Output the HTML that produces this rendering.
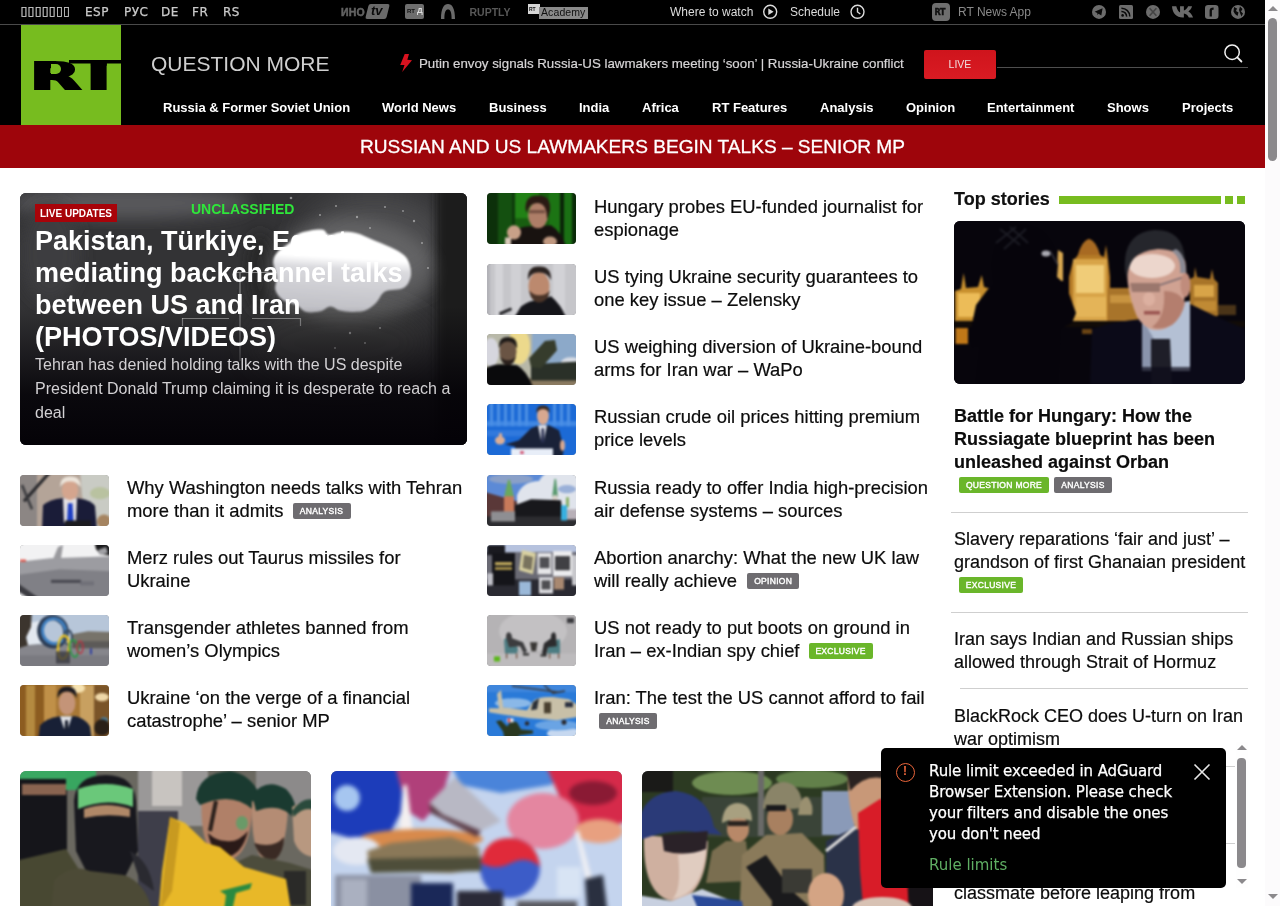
<!DOCTYPE html>
<html lang="en">
<head>
<meta charset="utf-8">
<title>RT - Breaking News, Russia News, World News and Video</title>
<style>
*{box-sizing:border-box;margin:0;padding:0}
html,body{width:1280px;height:906px;overflow:hidden;background:#fff}
body{font-family:"Liberation Sans",sans-serif;color:#000;position:relative}
a{color:inherit;text-decoration:none}
.abs{position:absolute}
#page{will-change:transform;position:absolute;left:0;top:0;width:1265px;height:906px;overflow:hidden;background:#fff}
/* header */
#hdr{position:absolute;left:0;top:0;width:1265px;height:125px;background:#000}
#topline{position:absolute;left:0;top:24px;width:1265px;height:1px;background:#4a4a4a}
.lang{position:absolute;top:4px;font-family:"DejaVu Sans","Liberation Sans",sans-serif;font-size:12px;line-height:16px;color:#cacaca;white-space:nowrap;letter-spacing:.5px;-webkit-text-stroke:.25px #cacaca}
.tt{position:absolute;top:4px;font-size:12px;line-height:16px;color:#dcdcdc;white-space:nowrap}
#logo{position:absolute;left:21px;top:25px;width:99.5px;height:100px;background:#77bc1f;overflow:hidden}
#qm{position:absolute;left:151px;top:51px;font-size:21px;line-height:26px;color:#cfcfcf;white-space:nowrap}
#tick{position:absolute;left:419px;top:56px;font-size:13.3px;line-height:16px;color:#d6d4d6;white-space:nowrap;-webkit-text-stroke:.2px #d6d4d6}
#live{position:absolute;left:924px;top:50px;width:72px;height:29px;background:linear-gradient(#cf141c,#d91b23);border-radius:2px;color:#f0dcdc;font-size:10.5px;line-height:28px;text-align:center}
#sline{position:absolute;left:997px;top:67px;width:251px;height:1px;background:#4e4e4e}
.nav{position:absolute;top:100px;font-size:13px;line-height:16px;font-weight:bold;color:#fff;white-space:nowrap}
#brk{position:absolute;left:0;top:125px;width:1265px;height:43px;background:#9e050b;color:#fff;font-size:19.1px;line-height:43px;-webkit-text-stroke:.3px #fff;text-align:center;white-space:nowrap}
/* scrollbar */
#sb{position:absolute;left:1265px;top:0;width:15px;height:906px;background:#fcfbfc}
#sbthumb{position:absolute;left:3px;top:18px;width:9px;height:143px;border-radius:5px;background:#8b898c}
/* lists */
.th{position:absolute;width:89px;height:50.5px;border-radius:4px;overflow:hidden;background:#888}
.th svg{display:block;width:89px;height:50.5px}
.t18{position:absolute;font-size:18px;line-height:23px;color:#0c0c0c;white-space:nowrap;margin-top:1px;-webkit-text-stroke:.2px #0c0c0c}
.tag{display:inline-block;vertical-align:top;height:16px;line-height:16px;font-size:8.5px;font-weight:normal;letter-spacing:.3px;text-align:center;border-radius:2px;color:#fff;background:#6e6c70;position:relative;-webkit-text-stroke:.4px #fff;width:58px}
.tag.g{background:#6ab62a}
.hr{position:absolute;height:1px;background:#cfcfcf}

#hero{position:absolute;left:20px;top:193px;width:447px;height:252px;border-radius:6px;overflow:hidden;background:#2b2b2d}
#heroimg{position:absolute;left:0;top:0}
#herograd{position:absolute;left:0;top:0;width:447px;height:252px;background:linear-gradient(to bottom,rgba(0,0,0,0) 45%,rgba(3,1,6,.85) 80%,rgba(3,1,6,.97) 100%)}
#lu{position:absolute;left:15px;top:11px;width:82px;height:18px;background:#a80309;color:#fff;font-weight:bold;font-size:10px;line-height:19.5px;text-align:center;white-space:nowrap}
#uncl{position:absolute;left:171px;top:8px;font-weight:bold;font-size:14px;line-height:16px;color:#2fe63a;white-space:nowrap}
#htitle{position:absolute;left:15px;top:32px;font-weight:bold;font-size:27px;line-height:32px;color:#fff;white-space:nowrap}
#hsum{position:absolute;left:15px;top:160px;font-size:16px;line-height:24px;color:#d2d0d3;white-space:nowrap}
.t184{position:absolute;font-size:18.4px;line-height:23px;color:#0c0c0c;white-space:nowrap;margin-top:1px;-webkit-text-stroke:.2px #0c0c0c}
#tops{position:absolute;left:954px;top:188px;-webkit-text-stroke:.2px #0c0c0c;font-size:18px;line-height:23px;font-weight:bold;color:#111;white-space:nowrap}
#topimg{position:absolute;left:954px;top:221px;width:291px;height:163px;border-radius:6px;overflow:hidden;background:#0b0712}
.card{position:absolute;top:771px;width:291px;height:164px;border-radius:6px;overflow:hidden;background:#777}
#isb{position:absolute;left:1236px;top:742px;width:12px;height:146px;background:#fefefe}
#isbthumb{position:absolute;left:1px;top:16px;width:9px;height:110px;border-radius:4px;background:#8b898c}
#pop{position:absolute;left:881px;top:748px;width:345px;height:140px;border-radius:5px;background:#000;color:#fff}
#popicon{position:absolute;left:14.5px;top:14.5px;width:19px;height:19px;border:1.8px solid #e8643a;border-radius:50%;color:#e8643a;font-size:12px;line-height:15.5px;text-align:center;font-weight:bold}
#poptext{position:absolute;left:48px;top:13px;font-family:"DejaVu Sans","Liberation Sans",sans-serif;font-size:15px;line-height:21px;white-space:nowrap;color:#fff;letter-spacing:-0.1px;-webkit-text-stroke:.25px #fff}
#poplink{position:absolute;left:48px;top:107px;font-family:"DejaVu Sans","Liberation Sans",sans-serif;font-size:15px;line-height:21px;color:#5fae63;white-space:nowrap}
#popx{position:absolute;left:312px;top:15px}

#lR{position:absolute;left:0;top:0;font-family:"DejaVu Sans","Liberation Sans",sans-serif;font-weight:bold;font-size:39px;line-height:1;color:#000;-webkit-text-stroke:2.3px #000;transform-origin:0 0;transform:translate(8.9px,32.2px) scale(1.685,.97)}
#lT{position:absolute;left:0;top:0;font-family:"DejaVu Sans","Liberation Sans",sans-serif;font-weight:bold;font-size:41px;line-height:1;color:#000;transform-origin:0 0;transform:translate(47.5px,31.2px) scale(2.14,1);clip-path:polygon(0 0,28px 0,28px 7.2px,17.95px 7.2px,17.95px 41px,10.3px 41px,10.3px 7.2px,0 7.2px)}
#lC{position:absolute;left:29.5px;top:38.5px;width:10.5px;height:10.3px;background:#77bc1f;border-radius:0 5px 5px 0}
.plogo{position:absolute;white-space:nowrap;line-height:14px}
.arr{position:absolute;width:0;height:0;border-left:5px solid transparent;border-right:5px solid transparent}
.arr.up{border-bottom:5px solid #8b898c}.arr.dn{border-top:5px solid #8b898c}
.arr.s{}
</style>
</head>
<body>
<div id="page">
<svg width="0" height="0" style="position:absolute"><defs>
<filter id="b07" x="-5%" y="-5%" width="110%" height="110%" color-interpolation-filters="sRGB"><feGaussianBlur stdDeviation="0.7"/></filter>
<filter id="b09" x="-5%" y="-5%" width="110%" height="110%" color-interpolation-filters="sRGB"><feGaussianBlur stdDeviation="0.9"/></filter>
<filter id="b1" x="-5%" y="-5%" width="110%" height="110%" color-interpolation-filters="sRGB"><feGaussianBlur stdDeviation="1"/></filter>
<filter id="b15" x="-5%" y="-5%" width="110%" height="110%" color-interpolation-filters="sRGB"><feGaussianBlur stdDeviation="1.5"/></filter>
<filter id="b2" x="-5%" y="-5%" width="110%" height="110%" color-interpolation-filters="sRGB"><feGaussianBlur stdDeviation="2"/></filter>
<filter id="b3" x="-5%" y="-5%" width="110%" height="110%" color-interpolation-filters="sRGB"><feGaussianBlur stdDeviation="3"/></filter>
<filter id="b6" x="-10%" y="-10%" width="120%" height="120%" color-interpolation-filters="sRGB"><feGaussianBlur stdDeviation="6"/></filter>
</defs></svg>
<div id="hdr">
  <span class="lang" style="left:20.5px;top:3px;font-size:12.5px;letter-spacing:.2px">▯▯▯▯▯▯▯</span>
  <span class="lang" style="left:85px">ESP</span>
  <span class="lang" style="left:124px">РУС</span>
  <span class="lang" style="left:161px">DE</span>
  <span class="lang" style="left:192px">FR</span>
  <span class="lang" style="left:223px">RS</span>
  <span class="tt" style="left:670px">Where to watch</span>
  <span class="tt" style="left:790px">Schedule</span>
  <span class="tt" style="left:958px;color:#8a8a8a">RT News App</span>

  <!-- partner logos -->
  <span class="plogo" style="left:341px;top:5px;font-size:10.5px;font-weight:bold;color:#626262;letter-spacing:.2px;-webkit-text-stroke:.5px #626262">ИНО</span>
  <span class="abs" style="left:367px;top:4px;width:21px;height:15px;background:#6a6a6a;transform:skewX(-14deg);border-radius:2px"></span>
  <span class="plogo" style="left:371px;top:4px;font-size:13px;font-weight:bold;color:#0a0a0a;font-style:italic">tv</span>
  <span class="abs" style="left:405px;top:4px;width:19px;height:15px;background:#6e6e6e;border-radius:2px"></span>
  <span class="plogo" style="left:407px;top:7px;font-size:6px;font-weight:bold;color:#111;line-height:8px">RT</span>
  <span class="plogo" style="left:417px;top:6px;font-size:8px;font-weight:bold;color:#ddd;line-height:10px">Д</span>
  <svg class="abs" style="left:440px;top:3px" width="16" height="17" viewBox="0 0 16 17"><path d="M1 16 C1 5 4 1 8 1 C12 1 15 5 15 16 L11.6 16 C11.6 9 10.5 6.5 8 6.5 C5.5 6.5 4.4 9 4.4 16 Z" fill="#6a6a6a"/></svg>
  <span class="plogo" style="left:469.5px;top:5px;font-size:10.5px;font-weight:bold;color:#585858">RUPTLY</span>
  <span class="abs" style="left:528px;top:4px;width:12px;height:10px;background:#d6d6d6"></span>
  <span class="plogo" style="left:529px;top:6px;font-size:5px;font-weight:bold;color:#111;line-height:6px">RT</span>
  <span class="abs" style="left:539px;top:7px;width:49px;height:12px;background:#8a8a8a"></span>
  <span class="plogo" style="left:541px;top:6px;font-size:10.5px;color:#111;line-height:13px;letter-spacing:.1px">Academy</span>
  <!-- play / clock -->
  <svg class="abs" style="left:762px;top:4px" width="16" height="16" viewBox="0 0 16 16"><circle cx="8.2" cy="7.8" r="6.5" fill="none" stroke="#dcdcdc" stroke-width="1.4"/><path d="M6.3 4.6 L11.6 7.8 L6.3 11 Z" fill="#dcdcdc"/></svg>
  <svg class="abs" style="left:849px;top:4px" width="16" height="16" viewBox="0 0 16 16"><circle cx="8.5" cy="7.8" r="6.5" fill="none" stroke="#dcdcdc" stroke-width="1.4"/><path d="M8.5 3.8 V8 L11.3 10" fill="none" stroke="#dcdcdc" stroke-width="1.4"/></svg>
  <!-- app icon -->
  <span class="abs" style="left:932px;top:3px;width:18px;height:18px;background:#6e6e6e;border-radius:4px"></span>
  <span class="plogo" style="left:934.5px;top:9px;font-size:8px;font-weight:bold;color:#111;line-height:8px;letter-spacing:-.3px;-webkit-text-stroke:.4px #111;font-family:'DejaVu Sans','Liberation Sans',sans-serif">RT</span>
  <!-- social -->
  <svg class="abs" style="left:1091px;top:4px" width="156" height="16" viewBox="0 0 156 16">
    <circle cx="8" cy="7.9" r="7" fill="#6c6c6c"/><path d="M3.6 7.8 L11.6 4.3 L10.3 11.6 L7.6 9.7 L6.4 10.9 L6.3 8.9 Z" fill="#0a0a0a"/>
    <rect x="28" y="1" width="14" height="14" rx="1.5" fill="#6c6c6c"/><circle cx="31.6" cy="11.4" r="1.3" fill="#0a0a0a"/><path d="M30.4 7.4 A5 5 0 0 1 35.6 12.6 M30.4 4.2 A8.3 8.3 0 0 1 38.8 12.6" stroke="#0a0a0a" stroke-width="1.5" fill="none"/>
    <circle cx="62" cy="7.9" r="7" fill="#6c6c6c"/><path d="M58.6 4.2 L65.4 11.8 M65.4 4.2 L58.6 11.8" stroke="#444" stroke-width="1.6"/>
    <path d="M81 2.8 H84.8 C85.5 6 87 8.3 88.2 8.6 V2.8 H91.6 V6.7 C93 6.5 94.6 4.6 95.4 2.8 H98.9 C98.4 5 96.8 6.9 95.6 7.6 C96.8 8.2 98.8 9.8 99.8 13.4 H96 C95.3 11.4 93.6 9.8 91.6 9.6 V13.4 H90.6 C85 13.4 81.4 9.4 81 2.8 Z" fill="#6c6c6c" transform="translate(-9.72,-0.6) scale(1.12,1.06)"/>
    <rect x="114" y="1" width="13.5" height="14" rx="3.2" fill="#6c6c6c"/><path d="M118.6 12.5 V6.6 C118.6 4.6 119.8 3.6 122.6 3.6 V5.8 C121.3 5.8 120.9 6.2 120.9 7.2 V12.5 Z" fill="#0a0a0a"/>
    <circle cx="147" cy="7.9" r="7" fill="#6c6c6c"/><path d="M143 3 L146 4.5 L145 7 L147.5 8.5 L146.5 12 L144 10 L142.5 7.5 Z M149 2.5 L151.5 5 L150 7.5 L152 9.5 L150.5 12.5 L149 9 L148 6 Z" fill="#0a0a0a"/>
  </svg>
  <!-- lightning -->
  <svg class="abs" style="left:398px;top:52px" width="16" height="22" viewBox="398 52 16 22"><path d="M404.7 54 L409 54 L407.3 59.7 L412 60.3 L402.2 72 L404.5 65 L400.2 65 Z" fill="#d8121f"/></svg>
  <!-- search -->
  <svg class="abs" style="left:1222px;top:42px" width="22" height="22" viewBox="1222 42 22 22"><circle cx="1232.1" cy="52.2" r="7.2" fill="none" stroke="#f2f2f2" stroke-width="1.5"/><path d="M1237.3 57.4 L1241.4 61.5" stroke="#f2f2f2" stroke-width="1.8" stroke-linecap="round"/></svg>
  <div id="topline"></div>
  <div id="logo"><span id="lR">R</span><span id="lT">T</span><i id="lC"></i></div>
  <div id="qm">QUESTION MORE</div>
  <div id="tick">Putin envoy signals Russia-US lawmakers meeting ‘soon’ | Russia-Ukraine conflict</div>
  <div id="live">LIVE</div>
  <div id="sline"></div>
  <span class="nav" style="left:163px">Russia &amp; Former Soviet Union</span>
  <span class="nav" style="left:382px">World News</span>
  <span class="nav" style="left:489px">Business</span>
  <span class="nav" style="left:579px">India</span>
  <span class="nav" style="left:642px">Africa</span>
  <span class="nav" style="left:712px">RT Features</span>
  <span class="nav" style="left:820px">Analysis</span>
  <span class="nav" style="left:906px">Opinion</span>
  <span class="nav" style="left:987px">Entertainment</span>
  <span class="nav" style="left:1107px">Shows</span>
  <span class="nav" style="left:1182px">Projects</span>
</div>
<div id="brk">RUSSIAN AND US LAWMAKERS BEGIN TALKS – SENIOR MP</div>

<!-- hero -->
<div id="hero">
  <svg id="heroimg" width="447" height="252" viewBox="0 0 447 252"><defs>
<filter id="hb8" x="-30%" y="-30%" width="160%" height="160%"><feGaussianBlur stdDeviation="8"/></filter>
<filter id="hb14" x="-30%" y="-30%" width="160%" height="160%"><feGaussianBlur stdDeviation="14"/></filter>
<filter id="hb1"><feGaussianBlur stdDeviation="1.1"/></filter>
<filter id="hb4" x="-30%" y="-30%" width="160%" height="160%"><feGaussianBlur stdDeviation="4"/></filter>
<linearGradient id="hbg" x1=".1" y1="0" x2="0" y2="1"><stop offset="0" stop-color="#fff"/><stop offset=".3" stop-color="#fff"/><stop offset=".43" stop-color="#dadade"/><stop offset="1" stop-color="#bcbcc2"/></linearGradient>
</defs>
<rect width="447" height="252" fill="#333335"/>
<ellipse cx="110" cy="10" rx="120" ry="16" fill="#59595b" filter="url(#hb8)"/>
<ellipse cx="30" cy="60" rx="30" ry="50" fill="#3e3e40" filter="url(#hb8)"/>
<ellipse cx="355" cy="50" rx="75" ry="50" fill="#4c4c4e" filter="url(#hb14)"/>
<ellipse cx="320" cy="150" rx="90" ry="40" fill="#3c3c3e" filter="url(#hb14)"/>
<rect x="416" y="-10" width="40" height="280" fill="#1d1d1f" filter="url(#hb4)"/>
<ellipse cx="240" cy="80" rx="14" ry="40" fill="#262628" filter="url(#hb8)"/>
<g fill="#d8d8d8" opacity=".55"><circle cx="271" cy="5" r="1.3"/><circle cx="316" cy="13" r="1"/><circle cx="337" cy="24" r="1.2"/><circle cx="365" cy="14" r="1"/><circle cx="394" cy="28" r="1.2"/><circle cx="402" cy="50" r="1"/><circle cx="383" cy="18" r="0.9"/><circle cx="350" cy="35" r="1"/><circle cx="408" cy="75" r="1"/><circle cx="300" cy="22" r="1"/><circle cx="330" cy="140" r="1.2"/><circle cx="345" cy="150" r="1"/><circle cx="360" cy="135" r="1"/><circle cx="315" cy="155" r="1"/><circle cx="372" cy="165" r="1.2"/></g>
<g stroke="#cfcfcf" stroke-opacity=".55" stroke-width="1.2" fill="none"><path d="M214 79.5 H257"/><path d="M220 80 V168"/><path d="M162 125.5 H209 M232 125.5 H280"/><path d="M162.5 125 V133 M280.5 125 V133"/></g>
<ellipse cx="330" cy="78" rx="84" ry="52" fill="#bbb" opacity=".22" filter="url(#hb8)"/>
<path d="M253.2 68.4 C253.4 64.2 255.4 61.7 258.1 58.6 C260.8 55.5 266.3 52.9 269.4 50.1 C272.4 47.3 272.9 43.8 276.4 41.7 C279.9 39.6 286.1 38.3 290.5 37.5 C294.9 36.7 300.1 36.1 303.1 36.8 C306.2 37.5 305.8 41.4 308.8 41.7 C311.9 42.1 316.7 39.1 321.4 38.9 C326.1 38.7 332.0 39.1 336.9 40.3 C341.8 41.5 345.4 43.6 351.0 45.9 C356.6 48.2 365.0 51.5 370.6 54.3 C376.2 57.1 381.4 59.5 384.7 62.8 C388.0 66.1 389.4 70.2 390.3 74.0 C391.2 77.8 391.5 81.8 390.3 85.3 C389.1 88.8 387.5 92.9 383.3 95.1 C379.1 97.3 369.4 96.2 365.0 98.6 C360.6 100.9 359.9 106.0 356.6 109.2 C353.3 112.4 349.5 116.0 345.3 117.6 C341.1 119.2 335.5 119.0 331.3 119.0 C327.1 119.0 323.5 118.5 320.0 117.6 C316.5 116.7 313.5 113.3 310.2 113.4 C306.9 113.5 304.3 117.4 300.3 118.3 C296.3 119.2 290.3 120.0 286.3 119.0 C282.3 118.0 280.4 114.1 276.4 112.0 C272.4 109.9 265.8 109.0 262.3 106.4 C258.8 103.8 256.2 100.2 255.3 96.5 C254.4 92.8 257.1 88.6 256.7 83.9 C256.3 79.2 253.0 72.6 253.2 68.4Z" fill="url(#hbg)" filter="url(#hb1)"/>
</svg>
  <div id="herograd"></div>
  <span id="lu">LIVE UPDATES</span>
  <span id="uncl">UNCLASSIFIED</span>
  <div id="htitle">Pakistan, Türkiye, Egypt<br>mediating backchannel talks<br>between US and Iran<br>(PHOTOS/VIDEOS)</div>
  <div id="hsum">Tehran has denied holding talks with the US despite<br>President Donald Trump claiming it is desperate to reach a<br>deal</div>
</div>
<!-- left list -->
<div class="th" style="left:20px;top:475px" id="th_l1"><svg viewBox="0 0 89 50" preserveAspectRatio="none"><g filter="url(#b09)"><rect x="-5" y="-5" width="99" height="60" fill="#b4a498"/>
<rect x="-5" y="-5" width="22" height="60" fill="#8c8684"/>
<path d="M60 -5 H95 V55 H72 L62 20Z" fill="#c9cbc4"/>
<ellipse cx="80" cy="18" rx="10" ry="6" fill="#b9c2a0"/>
<path d="M30 -3 L4 26" stroke="#2a2a2e" stroke-width="3.2"/>
<path d="M2 10 L12 34" stroke="#3a3a3e" stroke-width="2.5"/>
<path d="M22 55 L23 30 Q30 24 42 23 L58 23 Q72 25 75 31 L77 55Z" fill="#1a1c38"/>
<path d="M43 23 L57 23 L56 47 L44 47Z" fill="#e4e0e2"/>
<path d="M48 28 L52.5 28 L53.5 46 L47 46Z" fill="#1f3fc4"/>
<ellipse cx="50" cy="15" rx="8.2" ry="10" fill="#d4a58e"/>
<path d="M40 12 Q40 1 50 1.5 Q61 1 60.5 12 Q56 6 50 6.5 Q44 6 40 12Z" fill="#ece4da"/>
<rect x="45" y="45" width="26" height="8" fill="#1c1c20"/>
<ellipse cx="84" cy="46" rx="7" ry="7" fill="#a58460"/></g></svg></div>
<div class="t184" style="left:127px;top:475px">Why Washington needs talks with Tehran<br>more than it admits <span class="tag" style="margin-left:4px;top:4px">ANALYSIS</span></div>
<div class="th" style="left:20px;top:545px" id="th_l2"><svg viewBox="0 0 89 50" preserveAspectRatio="none"><g filter="url(#b09)"><rect x="-5" y="-5" width="99" height="60" fill="#f2f2f3"/>
<path d="M-5 17 L30 13 L94 11 V55 H-5Z" fill="#9c9ca1"/>
<path d="M-5 30 L40 24 L94 26 V55 H-5Z" fill="#808086"/>
<path d="M-5 38 L22 55 H-5Z" fill="#e6e6e8"/>
<path d="M-5 36 L24 56 L14 56 L-5 44Z" fill="#3c3c42"/>
<path d="M33 14 L38 2 L43 0 L41 13Z" fill="#9a9a9e"/>
<path d="M74 -5 H94 V11 L80 9 L76 4Z" fill="#18181a"/>
<path d="M78 5 L86 2 L88 8 L80 10Z" fill="#a0a0a4"/>
<rect x="0" y="14.5" width="6" height="2" fill="#e0483c"/>
<rect x="31" y="34.5" width="30" height="3" fill="#3e3e46" opacity=".85"/>
<rect x="60" y="36" width="14" height="4" fill="#6a6a72" opacity=".7"/></g></svg></div>
<div class="t184" style="left:127px;top:545px">Merz rules out Taurus missiles for<br>Ukraine</div>
<div class="th" style="left:20px;top:615px" id="th_l3"><svg viewBox="0 0 89 50" preserveAspectRatio="none"><g filter="url(#b09)"><rect x="-5" y="-5" width="99" height="60" fill="#b7c6d9"/>
<rect x="-5" y="29" width="99" height="30" fill="#86868c"/>
<rect x="-5" y="40" width="99" height="15" fill="#7a7a80"/>
<path d="M8 8 L20 6 L24 28 L6 30Z" fill="#e2e8f0"/>
<path d="M-5 -5 H12 L11 12 L6 22 L8 30 L-5 34Z" fill="#3c352e"/>
<path d="M52 19 L68 16 L94 17 V32 H52Z" fill="#77736a"/>
<path d="M52 26 H94 V33 H52Z" fill="#5c5a58"/>
<ellipse cx="33" cy="16.5" rx="13" ry="14" fill="none" stroke="#2c3c54" stroke-width="5.5" transform="rotate(-18 33 16.5)"/>
<ellipse cx="34" cy="16" rx="11.5" ry="12.5" fill="none" stroke="#3f7fc0" stroke-width="3" transform="rotate(-18 34 16)"/>
<ellipse cx="48" cy="22" rx="4" ry="7" fill="none" stroke="#3a4c62" stroke-width="2.2"/>
<ellipse cx="43.5" cy="32" rx="5.5" ry="11.5" fill="none" stroke="#e8c020" stroke-width="2.3" transform="rotate(6 43.5 32)"/>
<ellipse cx="54" cy="33" rx="4" ry="8.5" fill="none" stroke="#2a9a48" stroke-width="1.8" transform="rotate(-8 54 33)"/>
<ellipse cx="60" cy="32" rx="3" ry="6" fill="none" stroke="#c03040" stroke-width="1.4"/>
<rect x="36" y="36" width="14" height="12" fill="#3a3a40" opacity=".8"/>
<rect x="70" y="33" width="2" height="6" fill="#3040a0"/></g></svg></div>
<div class="t184" style="left:127px;top:615px">Transgender athletes banned from<br>women’s Olympics</div>
<div class="th" style="left:20px;top:685px" id="th_l4"><svg viewBox="0 0 89 50" preserveAspectRatio="none"><g filter="url(#b09)"><rect x="-5" y="-5" width="99" height="60" fill="#a87836"/>
<rect x="-5" y="-5" width="30" height="60" fill="#8c5c20"/>
<rect x="6" y="0" width="9" height="55" fill="#b48a40"/>
<rect x="24" y="0" width="12" height="40" fill="#c09048"/>
<rect x="60" y="0" width="14" height="55" fill="#c8a060"/>
<rect x="74" y="0" width="20" height="55" fill="#7a5428"/>
<ellipse cx="58" cy="3" rx="7" ry="5" fill="#f6e2b0"/>
<ellipse cx="82" cy="12" rx="7" ry="4" fill="#f0d8a8"/>
<ellipse cx="84" cy="36" rx="4" ry="4" fill="#4a80a0"/>
<ellipse cx="82" cy="42" rx="8" ry="8" fill="#2a2018"/>
<path d="M18 55 L20 40 Q26 33 40 31 L56 31 Q66 34 70 41 L72 55Z" fill="#182036"/>
<path d="M40 31 L52 31 L48 43 L44 43Z" fill="#e0e2e6"/>
<path d="M45 35 L48 35 L48.5 44 L44.5 44Z" fill="#1a2030"/>
<ellipse cx="47" cy="18" rx="8.4" ry="11.5" fill="#c49478"/>
<path d="M37.5 13 Q37 1.5 47 1.5 Q57.5 1.5 56.5 13 Q53 6 47 6.5 Q41 6 37.5 13Z" fill="#1c1a20"/></g></svg></div>
<div class="t184" style="left:127px;top:685px">Ukraine ‘on the verge of a financial<br>catastrophe’ – senior MP</div>
<!-- middle list -->
<div class="th" style="left:487px;top:193px" id="th_m1"><svg viewBox="0 0 89 50" preserveAspectRatio="none"><g filter="url(#b09)"><rect x="-5" y="-5" width="99" height="60" fill="#185e10"/>
<rect x="-5" y="-5" width="16" height="60" fill="#0c300a"/>
<rect x="11" y="-5" width="14" height="60" fill="#145010"/>
<rect x="28" y="-5" width="24" height="30" fill="#228216"/>
<rect x="25" y="-5" width="3" height="60" fill="#0e3a0c"/>
<rect x="62" y="-5" width="12" height="60" fill="#1c7414"/>
<rect x="73" y="-5" width="4" height="60" fill="#0a2408"/>
<rect x="77" y="-5" width="10" height="60" fill="#1a7014"/>
<rect x="85" y="-5" width="10" height="60" fill="#0a2a08"/>
<path d="M16 55 L22 40 Q34 32 46 33 L64 32 Q74 38 80 55Z" fill="#181210"/>
<ellipse cx="51" cy="22" rx="10" ry="13" fill="#ae7e68"/><rect x="42" y="17" width="16" height="3" fill="#5a3a30" opacity=".7"/>
<path d="M38.5 16 Q38 2 51 2.5 Q64 2 63 17 Q62 22 60 26 Q60 10 50 10 Q42 10 40 20Z" fill="#2a1a14"/>
<ellipse cx="27" cy="39" rx="7" ry="7" fill="#c8a088"/>
<ellipse cx="63" cy="48" rx="7" ry="5" fill="#c09880"/>
<rect x="18" y="44" width="6" height="8" fill="#d8c8b8"/></g></svg></div>
<div class="t184" style="left:594px;top:194px">Hungary probes EU-funded journalist for<br>espionage</div>
<div class="th" style="left:487px;top:264px" id="th_m2"><svg viewBox="0 0 89 50" preserveAspectRatio="none"><g filter="url(#b09)"><rect x="-5" y="-5" width="99" height="60" fill="#c6c6ca"/>
<rect x="8" y="-5" width="8" height="60" fill="#d4d4d8"/>
<rect x="24" y="-5" width="10" height="60" fill="#d0d0d4"/>
<rect x="66" y="-5" width="12" height="60" fill="#d2d2d6"/>
<rect x="-5" y="-5" width="8" height="60" fill="#b2b2b8"/>
<path d="M26 55 L34 42 Q44 35 52 36 L64 32 Q74 40 80 55Z" fill="#15151a"/>
<ellipse cx="52" cy="22" rx="10.5" ry="14" fill="#bc896e"/>
<path d="M42 26 Q44 38 52 38 Q61 38 63 26 Q60 31 52 31 Q46 31 42 26Z" fill="#4a3428"/>
<path d="M41 16 Q40 2 52 2.5 Q64.500 2 64 16 Q60 8 52 8.500 Q44 8 41 16Z" fill="#2a2220"/>
<path d="M12 48 L24 43 L25 45.500 L13 51Z" fill="#202024"/></g></svg></div>
<div class="t184" style="left:594px;top:264px">US tying Ukraine security guarantees to<br>one key issue – Zelensky</div>
<div class="th" style="left:487px;top:334px" id="th_m3"><svg viewBox="0 0 89 50" preserveAspectRatio="none"><g filter="url(#b09)"><rect x="-5" y="-5" width="99" height="60" fill="#8ca9c9"/>
<rect x="-5" y="-5" width="50" height="60" fill="#b8b8a8"/>
<ellipse cx="32" cy="12" rx="11" ry="18" fill="#ecd98c"/>
<ellipse cx="4" cy="18" rx="8" ry="14" fill="#d6d6de"/>
<ellipse cx="84" cy="28" rx="10" ry="5" fill="#d8dce4"/>
<rect x="40" y="44" width="55" height="10" fill="#8a7a60"/>
<path d="M44 30 L94 27 V46 H44Z" fill="#2a3028"/>
<path d="M42 24 L58 7 L68 6 L70 16 L54 34 L44 33Z" fill="#363c2c"/>
<path d="M-5 55 V36 Q4 30 14 30 L30 31 Q40 36 47 55Z" fill="#0a0a0c"/>
<ellipse cx="21" cy="17" rx="8.500" ry="12.500" fill="#6a5444"/>
<path d="M12 14 Q11 3 21 3 Q31 3 30 14 Q26 7 21 7.500 Q15 7 12 14Z" fill="#1e1a18"/>
<path d="M13 22 Q15 31 21 31 Q27 31 29 22 Q26 26 21 26 Q16 26 13 22Z" fill="#2a201c"/></g></svg></div>
<div class="t184" style="left:594px;top:334px">US weighing diversion of Ukraine-bound<br>arms for Iran war – WaPo</div>
<div class="th" style="left:487px;top:404px" id="th_m4"><svg viewBox="0 0 89 50" preserveAspectRatio="none"><g filter="url(#b09)"><rect x="-5" y="-5" width="99" height="60" fill="#1c6ad6"/>
<g fill="#5c9ce8" opacity=".75"><rect x="3" y="-2" width="3" height="24"/><rect x="10" y="-2" width="3" height="24"/><rect x="17" y="-2" width="3" height="24"/><rect x="24" y="-2" width="3" height="24"/><rect x="31" y="-2" width="3" height="24"/><rect x="38" y="-2" width="3" height="24"/><rect x="66" y="-2" width="3" height="24"/><rect x="73" y="-2" width="3" height="24"/><rect x="80" y="-2" width="3" height="24"/></g>
<rect x="-5" y="17" width="99" height="5" fill="#4a8ee6" opacity=".8"/>
<rect x="-5" y="26" width="50" height="6" fill="#3a80e0" opacity=".7"/>
<path d="M18 40 L32 36 L44 24 L52 21 L62 21 L72 26 L77 44 L75 55 L30 55 L28 42Z" fill="#1a2238"/>
<path d="M51 21 L60 21 L57 36 L54 36Z" fill="#e6e8f0"/>
<path d="M54.500 24 L57 24 L57.500 38 L54 38Z" fill="#2a3050"/>
<ellipse cx="56" cy="12" rx="6" ry="8.500" fill="#d8a890"/>
<path d="M49.500 9 Q49 1 56 1.500 Q63 1 62.500 9 Q60 5 56 5 Q52 5 49.500 9Z" fill="#3a2a20"/>
<ellipse cx="13" cy="36" rx="5" ry="4" fill="#dcae94"/>
<rect x="12" y="29" width="3" height="6" fill="#dcae94"/>
<ellipse cx="75.500" cy="41" rx="2.500" ry="5.500" fill="#d8a890"/>
<rect x="24" y="44" width="42" height="10" fill="#e8eef8"/>
<ellipse cx="35" cy="48" rx="2" ry="1.500" fill="#d04060"/></g></svg></div>
<div class="t184" style="left:594px;top:404px">Russian crude oil prices hitting premium<br>price levels</div>
<div class="th" style="left:487px;top:475px" id="th_m5"><svg viewBox="0 0 89 50" preserveAspectRatio="none"><g filter="url(#b09)"><rect x="-5" y="-5" width="99" height="60" fill="#5c8ad6"/>
<path d="M30 20 Q36 6 52 6 Q58 -5 70 -5 H94 V40 H30Z" fill="#e0e4ec"/>
<ellipse cx="24" cy="4" rx="22" ry="5" fill="#8aa0c8"/>
<ellipse cx="80" cy="14" rx="9" ry="4" fill="#9ab0d8"/>
<path d="M-5 16 L16 22 L30 26 V42 H-5Z" fill="#5a3838"/>
<path d="M17 22 L21 5 L23 5 L27 22Z" fill="#6aa85e"/>
<rect x="17" y="21" width="10" height="18" fill="#c87a5a"/>
<path d="M65 22 L67.500 4 L69 4 L71 22Z" fill="#5a9a70"/>
<rect x="65.500" y="20" width="5" height="10" fill="#d8d0c8"/>
<rect x="79" y="22" width="3" height="10" fill="#8ab068"/>
<path d="M28 30 L44 24 L74 25 L76 44 L28 46Z" fill="#18181c"/>
<rect x="-5" y="41" width="99" height="14" fill="#2c2c30"/>
<rect x="4" y="36" width="24" height="10" fill="#8e8e92"/>
<rect x="74" y="30" width="6" height="15" fill="#38b0e0"/>
<rect x="80" y="34" width="14" height="10" fill="#b8b0b8"/></g></svg></div>
<div class="t184" style="left:594px;top:475px">Russia ready to offer India high-precision<br>air defense systems – sources</div>
<div class="th" style="left:487px;top:545px" id="th_m6"><svg viewBox="0 0 89 50" preserveAspectRatio="none"><g filter="url(#b09)"><rect x="-5" y="-5" width="99" height="60" fill="#6a6a74"/>
<rect x="-5" y="-5" width="99" height="12" fill="#b6c2de"/>
<rect x="-5" y="34" width="99" height="22" fill="#2a2a32"/>
<rect x="0" y="0" width="18" height="10" fill="#1a1a20"/>
<rect x="5" y="8" width="23" height="32" fill="#15151a"/>
<rect x="8" y="17" width="17" height="3" fill="#c8b060"/>
<rect x="8" y="22" width="17" height="2.500" fill="#b8a050"/>
<path d="M35 5 L49 8 L46 29 L32 25Z" fill="#d8d0a0"/>
<path d="M37 10 L46 12 L44.500 25 L35.500 22.500Z" fill="#5a5448" opacity=".75"/>
<rect x="50.500" y="8" width="14" height="21" fill="#e6e6e8"/>
<rect x="52.500" y="12" width="10" height="11" fill="#2a2a2e" opacity=".8"/>
<rect x="66" y="6" width="19" height="25" fill="#ececee"/>
<rect x="68" y="11" width="15" height="14" fill="#222226" opacity=".85"/>
<rect x="85" y="10" width="6" height="30" fill="#c8c8cc"/>
<rect x="52" y="32" width="14" height="16" fill="#dcdce0"/>
<rect x="54.500" y="35" width="9" height="9" fill="#2a2a2e" opacity=".8"/>
<rect x="32" y="36" width="12" height="14" fill="#9ab8d8"/>
<rect x="0" y="28" width="6" height="12" fill="#c0c0c8"/>
<rect x="67" y="32" width="10" height="12" fill="#a88870"/></g></svg></div>
<div class="t184" style="left:594px;top:545px">Abortion anarchy: What the new UK law<br>will really achieve <span class="tag" style="margin-left:5px;top:4px;width:52px">OPINION</span></div>
<div class="th" style="left:487px;top:615px" id="th_m7"><svg viewBox="0 0 89 50" preserveAspectRatio="none"><g filter="url(#b09)"><rect x="-5" y="-5" width="99" height="60" fill="#b5b3b5"/>
<ellipse cx="46" cy="16" rx="34" ry="20" fill="#c3c1c3"/>
<rect x="-5" y="38" width="99" height="16" fill="#bdbbbd"/>
<path d="M17 24 L21 22 L31 33 L30 38 L18 38Z" fill="#4c7c82"/>
<path d="M19 22 Q19 17 22 17 Q25 18 25 23 L36 27 L40 36 L37 38 L33 31 L22 32Z" fill="#3c3c3e"/>
<rect x="19" y="38" width="1.200" height="5" fill="#6a4a3a"/><rect x="29" y="38" width="1.200" height="5" fill="#6a4a3a"/>
<rect x="36" y="38" width="6" height="2" fill="#222"/>
<path d="M43 27 H50.500 L49 36 H44.500Z" fill="#3a3836"/>
<path d="M62 26 L73 24 L73 38 L60 38Z" fill="#4c7c82"/>
<path d="M69 22 Q69 17 66.500 17 Q63.500 18 64 23 L57 28 L55 38 L59 40 L61 32 L70 31Z" fill="#2c2c2e"/>
<rect x="62" y="38" width="1.200" height="5" fill="#6a4a3a"/><rect x="71" y="38" width="1.200" height="5" fill="#6a4a3a"/>
<rect x="53.500" y="39" width="6" height="2" fill="#222"/>
<rect x="7" y="41" width="6" height="5" fill="#5ab818"/>
<rect x="80" y="3" width="7" height="5" fill="#3a3a3e"/></g></svg></div>
<div class="t184" style="left:594px;top:615px">US not ready to put boots on ground in<br>Iran – ex-Indian spy chief <span class="tag g" style="margin-left:4px;top:4px;width:64px">EXCLUSIVE</span></div>
<div class="th" style="left:487px;top:685px" id="th_m8"><svg viewBox="0 0 89 50" preserveAspectRatio="none"><g filter="url(#b09)"><rect x="-5" y="-5" width="99" height="60" fill="#2a7ad8"/>
<rect x="-5" y="-5" width="99" height="12" fill="#3f86dc"/>
<ellipse cx="26" cy="18" rx="18" ry="5" fill="#8ab8e8"/>
<ellipse cx="78" cy="48" rx="18" ry="6" fill="#c6d8f0"/>
<ellipse cx="70" cy="40" rx="22" ry="5" fill="#6aa4e4"/>
<path d="M25 1 L70 7" stroke="#3a3a3e" stroke-width="1.600"/>
<path d="M57 0 L66 8 L78 6" stroke="#3a3a3e" stroke-width="1.600" fill="none"/>
<path d="M10 9 L14 5 L16 22 L40 25 L46 16 Q52 11 66 12 L82 14 L94 22 V31 L70 35 L42 33 L14 29 L2 27 L2 23 L12 23Z" fill="#c8c0a8"/>
<path d="M46 17 L52 13 L50 24 L44 25Z" fill="#2a3038"/>
<rect x="57" y="17" width="7" height="11" fill="#4a4030"/>
<rect x="78" y="17" width="8" height="5" fill="#2a3040"/>
<path d="M9 36 L14 35 L20 41 L24 36 L30 37 L34 44 L46 45 L46 48 L32 50 L30 55 H18 L16 46Z" fill="#2a3820"/>
<rect x="20" y="33" width="6.500" height="4" fill="#e8e0e0"/>
<rect x="21" y="33" width="2" height="4" fill="#d03030"/>
<ellipse cx="40" cy="38" rx="2.200" ry="2.200" fill="#2a2a30"/>
<ellipse cx="77" cy="37" rx="2.500" ry="2.500" fill="#2a2a30"/></g></svg></div>
<div class="t184" style="left:594px;top:685px">Iran: The test the US cannot afford to fail<br><span class="tag" style="margin-left:5px;top:4px">ANALYSIS</span></div>
<!-- right column -->
<div id="tops">Top stories</div>
<div class="abs" style="left:1059px;top:196px;width:162px;height:8px;background:#77bc1f"></div>
<div class="abs" style="left:1225px;top:196px;width:8px;height:8px;background:#77bc1f"></div>
<div class="abs" style="left:1237px;top:196px;width:8px;height:8px;background:#77bc1f"></div>
<div id="topimg"><svg width="291" height="163" viewBox="0 0 291 163" style="display:block"><g filter="url(#b1)">
<rect x="-5" y="-5" width="301" height="173" fill="#07050c"/>
<!-- parliament -->
<path d="M1 100 V70 L7 68 L9.600 52 L12 67 L24 66 L27.700 54 L30 66 L45 70 V100Z" fill="#c8902e"/>
<rect x="4" y="72" width="22" height="24" fill="#ecbc58"/>
<rect x="30" y="86" width="15" height="13" fill="#e0a848"/>
<path d="M102 60 L104 29 L109 32 L109 60Z" fill="#d8a850"/>
<path d="M100 98 V84 L118 82 V98Z" fill="#b87a24"/>
<path d="M115 100 V56 L119 40 L124 34 Q128 20 135 18 Q142 20 146 34 L150 36 L152 24 L154 38 L156 56 V100Z" fill="#b47a26"/>
<path d="M119 100 V38 L153 38 V100Z" fill="#d8a448"/>
<rect x="122" y="44" width="28" height="28" fill="#f0cc78"/>
<rect x="122" y="76" width="30" height="20" fill="#e4b458"/>
<path d="M124 34 Q128 20 135 18 Q142 20 146 34Z" fill="#a86a22"/>
<path d="M154 100 V67 L186 67 V100Z" fill="#a8742a"/>
<rect x="156" y="74" width="28" height="8" fill="#c89440"/>
<path d="M236 96 V58 L240 56 L241 46 L243 56 L256 58 L258 48 L260 58 L264 62 V95Z" fill="#a87428"/>
<rect x="240" y="64" width="20" height="12" fill="#d8a448"/>
<rect x="240" y="80" width="22" height="10" fill="#c08a34"/>
<rect x="264" y="84" width="18" height="10" fill="#4a3418"/>
<rect x="0" y="100" width="291" height="6" fill="#120c08"/>
<path d="M1.500 107 H14 V123 H1.500Z" fill="#c07818"/>
<path d="M30 108 H39 V116 H30Z" fill="#8a5a18"/>
<path d="M128 108 H142 V113 H128Z" fill="#6a4414"/>
<!-- silhouette -->
<path d="M22 163 L26 124 L18 126 L16 112 L22 84 L34 68 L40 64 L38 44 Q40 6 70 4 Q100 6 104 44 L103 56 L112 64 L122 92 L118 102 L106 108 L104 163Z" fill="#06040b"/>
<path d="M42 22 L62 6 M46 8 L66 24 M50 28 L72 8 M56 6 L74 22" stroke="#1c1c24" stroke-width="2" fill="none"/>
<ellipse cx="92" cy="32.500" rx="4.500" ry="3" fill="#c8c8d0" opacity=".85"/>
<path d="M96 30 L104 44" stroke="#3a3a44" stroke-width="1.500"/>
<!-- man -->
<path d="M136 163 L138 108 Q160 100 188 98 L234 82 Q262 96 291 108 L296 168Z" fill="#0b0a18"/>
<path d="M188 86 L236 80 L236 150 L192 150Z" fill="#b4c0d4"/>
<path d="M188 98 L200 118 L196 150 L188 150Z" fill="#8a94ac"/>
<path d="M197 118 L216 118 L218 165 L197 165Z" fill="#1e1e28"/>
<path d="M173 52 Q172 30 184 22 Q204 14 224 24 Q234 36 232 62 Q232 84 222 100 Q210 112 196 108 Q184 102 180 88 Q174 72 173 52Z" fill="#d0a292"/>
<ellipse cx="198" cy="45" rx="23" ry="12" fill="#ecd6cc"/>
<path d="M210 70 Q226 70 231 82 Q228 96 218 104 Q206 110 198 106 Q212 96 210 70Z" fill="#b47e6e"/>
<path d="M176 62 H206 L206 71 H178Z" fill="#8a6860" opacity=".75"/>
<path d="M206 64 L230 56" stroke="#7a6a70" stroke-width="1.500" fill="none"/>
<path d="M190 90 H206 V93.500 H190Z" fill="#9a5450"/>
<ellipse cx="195" cy="78" rx="6" ry="7" fill="#dcb0a0"/>
<ellipse cx="231.500" cy="64" rx="5" ry="12" fill="#c08c7c"/>
<path d="M171 50 Q168 12 200 9 Q230 8 231 40 Q224 28 204 28 Q184 30 178 40 Q174 46 173 58Z" fill="#25262c"/>
<path d="M222 28 Q232 34 232 52 L226 52 Q228 38 218 30Z" fill="#8a8a94"/>
<rect x="180" y="146" width="70" height="22" fill="#0b0a18" opacity=".7"/>
</g></svg></div>
<div class="t18" style="left:954px;top:404px;font-weight:bold">Battle for Hungary: How the<br>Russiagate blueprint has been<br>unleashed against Orban</div>
<div class="abs" style="left:959px;top:477px;white-space:nowrap;font-size:0"><span class="tag g" style="width:90px">QUESTION MORE</span><span class="tag" style="margin-left:5px">ANALYSIS</span></div>
<div class="hr" style="left:951px;top:512px;width:297px"></div>
<div class="t18" style="left:954px;top:527px">Slavery reparations ‘fair and just’ –<br>grandson of first Ghanaian president</div>
<div class="abs" style="left:959px;top:577px;white-space:nowrap;font-size:0"><span class="tag g" style="width:64px">EXCLUSIVE</span></div>
<div class="hr" style="left:951px;top:612px;width:297px"></div>
<div class="t18" style="left:954px;top:627px">Iran says Indian and Russian ships<br>allowed through Strait of Hormuz</div>
<div class="hr" style="left:960px;top:688px;width:288px"></div>
<div class="t18" style="left:954px;top:704px">BlackRock CEO does U-turn on Iran<br>war optimism</div>
<div class="t18" style="left:954px;top:881px">classmate before leaping from</div>
<div class="hr" style="left:1226px;top:766px;width:9px"></div><div class="hr" style="left:1226px;top:843px;width:9px"></div>
<!-- inner scrollbar -->
<div id="isb"><div id="isbthumb"></div><i class="arr up s" style="left:.5px;top:3px"></i><i class="arr dn s" style="left:.5px;top:137px"></i></div>
<!-- bottom cards -->
<div class="card" style="left:20px" id="c1"><svg width="291" height="164" viewBox="0 0 291 164" style="display:block"><g filter="url(#b1)"><rect x="-5" y="-5" width="301" height="174" fill="#6a6860"/>
<rect x="118" y="-5" width="70" height="60" fill="#9a9898"/>
<rect x="132" y="-5" width="30" height="40" fill="#c8c4c0"/>
<rect x="118" y="40" width="40" height="110" fill="#3e3e4a"/>
<rect x="236" y="-5" width="60" height="40" fill="#8c8a8a"/>
<!-- left man 1 -->
<rect x="-5" y="-5" width="52" height="95" fill="#15151a"/>
<rect x="-5" y="-2" width="52" height="10" fill="#3aa862"/>
<rect x="2" y="13" width="44" height="11" fill="#8a6450"/>
<rect x="46" y="-5" width="30" height="24" fill="#38a660"/>
<path d="M-5 90 L46 78 L60 100 L60 170 H-5Z" fill="#484832"/>
<!-- man 2 -->
<path d="M54 30 Q56 4 86 4 Q114 4 116 30 L118 80 L104 108 L70 108 L56 80Z" fill="#18181e"/>
<path d="M58 18 Q86 8 113 18 L113 36 Q86 26 58 38Z" fill="#6ac87a"/>
<path d="M64 38 Q86 30 110 38 L110 46 Q86 42 64 47Z" fill="#b08868"/>
<path d="M28 170 L34 110 Q50 92 70 100 L104 104 Q126 112 132 140 L134 170Z" fill="#4c4a36"/>
<path d="M110 80 Q130 90 134 120 L120 110Z" fill="#2a2a30"/>
<!-- beret man -->
<path d="M182 22 Q178 86 206 90 Q234 86 232 22Z" fill="#b08068"/>
<path d="M188 62 Q192 84 206 86 Q222 84 228 60 Q218 72 206 70 Q196 70 188 62Z" fill="#2a1a18"/>
<path d="M176 28 Q178 2 210 0 Q236 4 244 36 Q240 44 232 38 Q212 20 180 34Z" fill="#1a3a30"/>
<path d="M196 30 L190 60" stroke="#2a201c" stroke-width="4"/>
<ellipse cx="222" cy="52" rx="6" ry="7" fill="#6a9a68"/>
<!-- beret man 2 -->
<path d="M232 30 Q230 88 250 92 Q266 86 268 36Z" fill="#b48c74"/>
<path d="M232 24 Q246 6 266 18 Q278 30 276 50 Q262 30 236 40Z" fill="#1a3a30"/>
<path d="M234 72 Q242 92 256 88 Q264 80 264 66 Q254 78 234 72Z" fill="#3a2a24"/>
<!-- third -->
<path d="M272 36 Q284 28 296 34 V86 Q280 86 274 70Z" fill="#b89880"/><path d="M272 40 Q284 24 296 30 V40 Q284 34 274 46Z" fill="#2a4a3c"/>
<!-- uniforms -->
<path d="M206 96 L232 84 L270 92 L296 100 V170 H200Z" fill="#4c4c3c"/>
<rect x="264" y="100" width="22" height="34" fill="#2a2a28"/>
<!-- flag -->
<path d="M150 46 L165 52 L186 72 L200 76 L224 96 L266 108 L276 170 L136 170 L142 100Z" fill="#e8b828"/>
<path d="M150 46 L160 52 L152 120 L140 140Z" fill="#c89a20"/>
<path d="M200 120 L232 112 L230 118 L216 122 L212 140 L204 140 L206 124Z" fill="#2a8a40"/></g></svg></div>
<div class="card" style="left:331px" id="c2"><svg width="291" height="164" viewBox="0 0 291 164" style="display:block"><g filter="url(#b2)"><rect x="-5" y="-5" width="301" height="174" fill="#c4d4ee"/>
<path d="M-5 -5 H70 L76 30 L60 60 L30 70 L-5 60Z" fill="#1c3cba"/>
<ellipse cx="16" cy="27" rx="13" ry="13" fill="#a6c6f0"/>
<path d="M64 -5 H120 L110 30 L92 50 L76 40Z" fill="#b0407a"/>
<path d="M120 -5 H240 L220 14 L170 22 L130 14Z" fill="#4a84da"/>
<path d="M215 -5 H296 V50 L270 60 L240 52 L226 20Z" fill="#d62a4a"/>
<ellipse cx="262" cy="22" rx="24" ry="12" fill="#8a1a34"/>
<ellipse cx="212" cy="50" rx="36" ry="28" fill="#e486a0"/>
<ellipse cx="268" cy="60" rx="24" ry="12" fill="#e8a080"/>
<path d="M72 14 L76 14 L82 62 L68 62Z" fill="#f4f0f0"/>
<ellipse cx="90" cy="68" rx="62" ry="10" fill="#d88a4c"/>
<ellipse cx="26" cy="80" rx="24" ry="14" fill="#e4e8f2"/>
<path d="M98 32 L124 6 L170 50 L150 60 L112 44Z" fill="#b8b8c4"/>
<path d="M98 32 L112 44 L150 60 L146 66 L100 42Z" fill="#5a3a44"/>
<circle cx="179" cy="97" r="30" fill="#3c5cc8"/>
<path d="M150 92 Q154 66 180 67 Q206 70 209 96 Q196 84 180 92 Q164 100 150 92Z" fill="#e02a3a"/>
<path d="M36 80 L60 72 L120 66 L148 76 L150 98 L120 102 L40 100Z" fill="#8a7858"/>
<path d="M36 88 L150 86 L150 100 L40 102Z" fill="#4e4e3a"/>
<rect x="4" y="104" width="86" height="60" fill="#8a90a2"/>
<rect x="10" y="108" width="26" height="50" fill="#aab0c0"/>
<rect x="80" y="112" width="42" height="55" fill="#1a2858"/>
<rect x="126" y="120" width="46" height="50" fill="#2a2a38"/>
<rect x="186" y="130" width="60" height="40" fill="#5a5a60"/>
<path d="M244 60 L248 60 L262 112 L256 114Z" fill="#f0f0f4"/>
<path d="M254 108 L272 104 L280 170 L258 170Z" fill="#2a3040"/>
<rect x="226" y="96" width="24" height="30" fill="#d8e4f4"/></g></svg></div>
<div class="card" style="left:642px" id="c3"><svg width="291" height="164" viewBox="0 0 291 164" style="display:block"><g filter="url(#b1)"><rect x="-5" y="-5" width="301" height="174" fill="#2c3a22"/>
<rect x="-5" y="-5" width="36" height="26" fill="#1a1a18"/>
<ellipse cx="90" cy="12" rx="40" ry="12" fill="#6e8c52"/>
<ellipse cx="170" cy="8" rx="36" ry="9" fill="#62804a"/>
<rect x="60" y="26" width="150" height="40" fill="#3a4438"/>
<rect x="180" y="20" width="32" height="44" fill="#8a9ab8"/>
<rect x="116" y="-5" width="6" height="70" fill="#6a6a68"/>
<!-- right man -->
<path d="M206 -5 H240 V60 H214 Q204 30 206 -5Z" fill="#c89878"/>
<path d="M204 -5 H244 V8 Q224 2 208 20Z" fill="#2a2220"/>
<path d="M184 70 L210 58 L240 60 L244 170 H184Z" fill="#2a3248"/>
<rect x="256" y="-5" width="45" height="180" fill="#161216"/><path d="M216 42 L238 28 L262 30 L268 170 L224 170 L218 100Z" fill="#d81c28"/>
<path d="M184 80 L214 56" stroke="#d8d8d8" stroke-width="3"/>
<!-- soldiers -->
<path d="M64 112 L70 80 L84 70 L104 70 L108 110Z" fill="#7a6e50"/>
<ellipse cx="96" cy="58" rx="11" ry="13" fill="#b88868"/>
<path d="M80 50 Q82 32 96 32 Q110 33 110 50 Q96 44 80 52Z" fill="#a8a080"/>
<rect x="86" y="50" width="20" height="5" fill="#2a2420"/>
<path d="M96 170 L100 84 L124 64 L160 62 L182 84 L184 170Z" fill="#8a7a5a"/>
<ellipse cx="138" cy="48" rx="13" ry="16" fill="#a88060"/>
<path d="M121 36 Q124 11 142 11 Q160 13 160 36 Q150 40 140 36 Q130 34 121 38Z" fill="#8a8468"/>
<rect x="124" y="34" width="20" height="6" fill="#1a1a1c"/>
<path d="M156 44 Q158 24 166 26 Q172 34 170 44Z" fill="#9a9070"/>
<path d="M104 96 L124 84 L150 120 L166 134 L160 170 H128 L130 130Z" fill="#1a1a1c"/>
<rect x="140" y="98" width="30" height="24" fill="#3a3a34"/>
<!-- hand -->
<ellipse cx="184" cy="124" rx="18" ry="22" fill="#d4a484"/><ellipse cx="240" cy="137" rx="30" ry="11" fill="#d8c2b4"/>
<!-- left man -->
<path d="M2 64 Q0 124 30 130 Q64 128 66 70Z" fill="#cfb0a0"/>
<path d="M36 84 Q40 120 30 128 Q60 124 64 78Z" fill="#e0ccc0"/>
<path d="M-5 66 Q-5 22 34 20 Q66 24 72 56 L80 64 L60 62 Q30 56 -5 70Z" fill="#2a3a78"/>
<path d="M20 64 L66 60 L64 78 Q44 86 22 80Z" fill="#2a2228"/>
<path d="M-5 124 L30 130 L60 118 L100 134 L104 170 H-5Z" fill="#c8d0e0"/>
<path d="M50 124 L100 130 L106 170 H70Z" fill="#2a4a98"/></g></svg></div>
<!-- popup -->
<div id="pop">
  <div id="popicon">!</div>
  <div id="poptext">Rule limit exceeded in AdGuard<br>Browser Extension. Please check<br>your filters and disable the ones<br>you don't need</div>
  <div id="poplink">Rule limits</div>
  <svg id="popx" width="18" height="18" viewBox="0 0 18 18"><path d="M1.5 1.5 L16.5 16.5 M16.5 1.5 L1.5 16.5" stroke="#e8e8e8" stroke-width="1.6" fill="none"/></svg>
</div>
<!--MAIN-->
</div>
<div id="sb"><div id="sbthumb"></div><i class="arr up" style="left:2.5px;top:6px"></i><i class="arr dn" style="left:2.5px;top:894px"></i></div>
</body>
</html>
